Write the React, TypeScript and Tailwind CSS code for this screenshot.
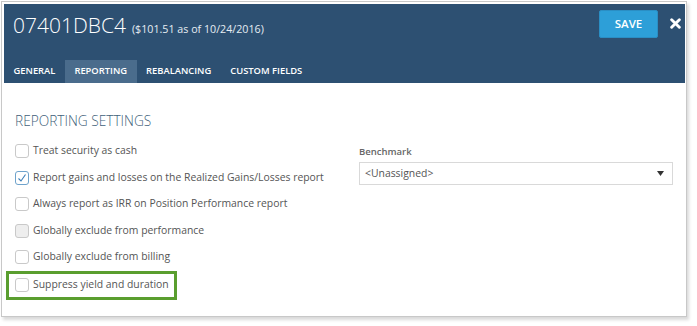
import React from 'react';

const TABS = ['General', 'Reporting', 'Rebalancing', 'Custom Fields'];

const OPTIONS = [
  { label: 'Treat security as cash', checked: false },
  { label: 'Report gains and losses on the Realized Gains/Losses report', checked: true },
  { label: 'Always report as IRR on Position Performance report', checked: false },
  { label: 'Globally exclude from performance', checked: false, disabled: true },
  { label: 'Globally exclude from billing', checked: false },
];

function Box({ checked, disabled }: { checked?: boolean; disabled?: boolean }) {
  return (
    <span
      className={`flex h-[14px] w-[14px] shrink-0 items-center justify-center rounded-[3px] border ${
        checked ? 'border-[#6fa3cc]' : 'border-[#c9c9c9]'
      } ${disabled ? 'bg-[#eeeeee]' : 'bg-white'}`}
    >
      {checked && (
        <svg width="10" height="10" viewBox="0 0 10 10" fill="none">
          <path d="M1.5 5.5 L4 8 L8.5 1.5" stroke="#3d7fb8" strokeWidth="1.1" />
        </svg>
      )}
    </span>
  );
}

export default function App() {
  return (
    <div className="h-[326px] w-[697px] bg-white pl-[1px] pt-[1px] font-['Open_Sans',sans-serif]">
      <div className="h-[316px] w-[686px] border border-[#c8c8c8] p-[2px] pr-[1px] shadow-[2px_3px_3px_rgba(0,0,0,0.15)]">
        <div className="flex h-[79px] flex-col justify-between bg-[#2d5072]">
          <div className="flex items-start justify-between pl-[9px] pr-[4px] pt-[6px]">
            <div className="flex items-baseline gap-[6px] text-white">
              <span className="text-[21px] font-light leading-[30px]">07401DBC4</span>
              <span className="text-[10.7px] text-[#e6edf3]">($101.51 as of 10/24/2016)</span>
            </div>
            <div className="flex items-center gap-[12px]">
              <button className="h-[28px] w-[59px] rounded-[2px] border border-[#2a8ec4] bg-[#2d9fd8] text-[11.5px] font-semibold text-white">
                SAVE
              </button>
              <svg width="11" height="11" viewBox="0 0 10 10" className="mt-[-2px]">
                <path d="M1.5 1.5 L8.5 8.5 M8.5 1.5 L1.5 8.5" stroke="white" strokeWidth="2.6" strokeLinecap="round" />
              </svg>
            </div>
          </div>
          <div className="flex h-[23px]">
            {TABS.map((t) => (
              <div
                key={t}
                className={`flex items-center px-[9.5px] text-[9.4px] font-semibold uppercase text-white ${
                  t === 'Reporting' ? 'bg-[#4a6c8c]' : ''
                }`}
              >
                {t}
              </div>
            ))}
          </div>
        </div>

        <div className="flex pl-[11px] pt-[28px]">
          <div className="w-[344px]">
            <h2 className="mb-[7px] text-[13.7px] font-light leading-[20px] text-[#3f5f7a]">REPORTING SETTINGS</h2>
            <div className="flex flex-col">
              {OPTIONS.map((o) => (
                <label key={o.label} className="flex h-[26.5px] items-center gap-[4px] whitespace-nowrap text-[10.4px] text-[#555555]">
                  <Box checked={o.checked} disabled={o.disabled} />
                  {o.label}
                </label>
              ))}
              <div className="ml-[-9px] w-[171px] border-[3px] border-[#5a9e2f] py-[3px] pl-[6px]">
                <label className="flex h-[17px] items-center gap-[4px] whitespace-nowrap text-[10.4px] text-[#555555]">
                  <Box />
                  Suppress yield and duration
                </label>
              </div>
            </div>
          </div>
          <div className="pt-[34px]">
            <div className="mb-[3px] text-[9.5px] font-semibold leading-[14px] text-[#666666]">Benchmark</div>
            <div className="flex h-[23px] w-[314px] items-center justify-between border border-[#d9d9d9] pl-[5px] pr-[8px] text-[10.4px] text-[#555555]">
              <span>&lt;Unassigned&gt;</span>
              <svg width="7" height="5" viewBox="0 0 7 5">
                <path d="M0 0 H7 L3.5 5 Z" fill="#333" />
              </svg>
            </div>
          </div>
        </div>
      </div>
    </div>
  );
}
